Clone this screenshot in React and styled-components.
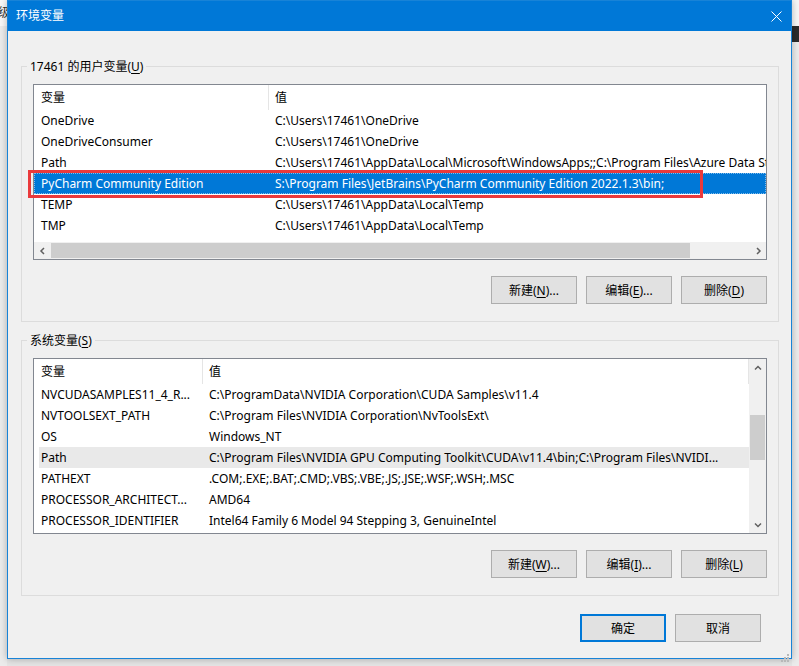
import React from "react";
import styled, { createGlobalStyle } from "styled-components";

const userVars = [
  { name: "OneDrive", value: "C:\\Users\\17461\\OneDrive" },
  { name: "OneDriveConsumer", value: "C:\\Users\\17461\\OneDrive" },
  {
    name: "Path",
    value:
      "C:\\Users\\17461\\AppData\\Local\\Microsoft\\WindowsApps;;C:\\Program Files\\Azure Data Studio\\bin",
  },
  {
    name: "PyCharm Community Edition",
    value: "S:\\Program Files\\JetBrains\\PyCharm Community Edition 2022.1.3\\bin;",
    tone: "focus",
  },
  { name: "TEMP", value: "C:\\Users\\17461\\AppData\\Local\\Temp" },
  { name: "TMP", value: "C:\\Users\\17461\\AppData\\Local\\Temp" },
];

const systemVars = [
  { name: "NVCUDASAMPLES11_4_R...", value: "C:\\ProgramData\\NVIDIA Corporation\\CUDA Samples\\v11.4" },
  { name: "NVTOOLSEXT_PATH", value: "C:\\Program Files\\NVIDIA Corporation\\NvToolsExt\\" },
  { name: "OS", value: "Windows_NT" },
  {
    name: "Path",
    value: "C:\\Program Files\\NVIDIA GPU Computing Toolkit\\CUDA\\v11.4\\bin;C:\\Program Files\\NVIDI...",
    tone: "dim",
  },
  { name: "PATHEXT", value: ".COM;.EXE;.BAT;.CMD;.VBS;.VBE;.JS;.JSE;.WSF;.WSH;.MSC" },
  { name: "PROCESSOR_ARCHITECT...", value: "AMD64" },
  { name: "PROCESSOR_IDENTIFIER", value: "Intel64 Family 6 Model 94 Stepping 3, GenuineIntel" },
];

const Chevron = ({ dir }) => {
  const paths = {
    left: "M5 1 L2 4 L5 7",
    right: "M3 1 L6 4 L3 7",
    up: "M1 5.5 L4 2.5 L7 5.5",
    down: "M1 2.5 L4 5.5 L7 2.5",
  };
  return (
    <svg width="8" height="8" viewBox="0 0 8 8">
      <path d={paths[dir]} fill="none" stroke="#606060" strokeWidth="1.5" />
    </svg>
  );
};

const VarList = ({ rows, nameWidth, valueDivider, scroll, children }) => (
  <ListBox>
    <ListMain>
      <HeaderRow>
        <HeaderCell $w={nameWidth} $pad={7} $divider>
          变量
        </HeaderCell>
        <HeaderCell $pad={6} $divider={valueDivider}>
          值
        </HeaderCell>
      </HeaderRow>
      {rows.map((r) => (
        <Row key={r.name + r.value} $tone={r.tone}>
          <Cell $w={nameWidth} $pad={7}>
            {r.name}
          </Cell>
          <Cell $pad={6}>{r.value}</Cell>
        </Row>
      ))}
      {scroll === "h" && (
        <>
          <Spacer />
          <HScroll>
            <ArrowBtn>
              <Chevron dir="left" />
            </ArrowBtn>
            <Track>
              <Thumb $h $offset={0} $size={639} />
            </Track>
            <ArrowBtn>
              <Chevron dir="right" />
            </ArrowBtn>
          </HScroll>
        </>
      )}
    </ListMain>
    {scroll === "v" && (
      <VScroll>
        <ArrowBtn>
          <Chevron dir="up" />
        </ArrowBtn>
        <Track $v>
          <Thumb $offset={39} $size={45} />
        </Track>
        <ArrowBtn>
          <Chevron dir="down" />
        </ArrowBtn>
      </VScroll>
    )}
    {children}
  </ListBox>
);

const ActionButtons = ({ keys }) => (
  <ButtonRow>
    <Button>
      新建(<u>{keys[0]}</u>)...
    </Button>
    <Button>
      编辑(<u>{keys[1]}</u>)...
    </Button>
    <Button>
      删除(<u>{keys[2]}</u>)
    </Button>
  </ButtonRow>
);

const App = () => {
  return (
    <>
      <GlobalStyle />
      <Backdrop>
        <LeftStrip>
          <GhostText>
            <span>级</span>
          </GhostText>
        </LeftStrip>
        <Window>
          <TitleBar>
            <Title>环境变量</Title>
            <CloseButton>
              <svg width="11" height="11" viewBox="0 0 11 11">
                <path d="M0.5 0.5 L10.5 10.5 M10.5 0.5 L0.5 10.5" stroke="#fff" strokeWidth="1" />
              </svg>
            </CloseButton>
          </TitleBar>
          <Body>
            <Group>
              <Legend>
                17461 的用户变量(<u>U</u>)
              </Legend>
              <VarList rows={userVars} nameWidth={235} scroll="h">
                <Marker />
              </VarList>
              <ActionButtons keys={["N", "E", "D"]} />
            </Group>
            <Group $gap>
              <Legend>
                系统变量(<u>S</u>)
              </Legend>
              <VarList rows={systemVars} nameWidth={169} valueDivider scroll="v" />
              <ActionButtons keys={["W", "I", "L"]} />
            </Group>
          </Body>
          <Footer>
            <Button $primary>确定</Button>
            <Button>取消</Button>
          </Footer>
          <Grip>
            <svg width="8" height="8" viewBox="0 0 8 8">
              <rect x="6" y="0" width="2" height="2" fill="#b8b8b8" />
              <rect x="3" y="3" width="2" height="2" fill="#b8b8b8" />
              <rect x="6" y="3" width="2" height="2" fill="#b8b8b8" />
              <rect x="0" y="6" width="2" height="2" fill="#b8b8b8" />
              <rect x="3" y="6" width="2" height="2" fill="#b8b8b8" />
              <rect x="6" y="6" width="2" height="2" fill="#b8b8b8" />
            </svg>
          </Grip>
        </Window>
        <RightStrip>
          <Patch $h={26} $bg="#f7f7f7" />
          <Patch $h={16} $bg="#2b2b2b" />
        </RightStrip>
      </Backdrop>
    </>
  );
};

export default App;

const GlobalStyle = createGlobalStyle`
  html, body {
    margin: 0;
    padding: 0;
  }
  body {
    font-family: "Noto Sans", "Noto Sans CJK SC", sans-serif;
    font-size: 12px;
    color: #000;
    background: #ececec;
  }
  u {
    text-underline-offset: 2px;
  }
`;

const Backdrop = styled.div`
  display: flex;
  align-items: flex-start;
  width: 799px;
  height: 666px;
  overflow: hidden;
  background: #e4e4e4;
`;

const LeftStrip = styled.div`
  width: 7px;
  height: 100%;
  flex-shrink: 0;
  overflow: hidden;
  background: #ebebeb;
`;

const GhostText = styled.div`
  display: flex;
  justify-content: flex-end;
  height: 26px;
  line-height: 26px;
  background: #f7f7f7;
  color: #333;
  span {
    flex-shrink: 0;
    margin-right: -3px;
  }
`;

const RightStrip = styled.div`
  width: 7px;
  height: 100%;
  flex-shrink: 0;
  background: #ebebeb;
`;

const Patch = styled.div`
  height: ${(p) => p.$h}px;
  background: ${(p) => p.$bg};
`;

const Window = styled.div`
  position: relative;
  z-index: 1;
  display: flex;
  flex-direction: column;
  width: 785px;
  height: 659px;
  flex-shrink: 0;
  box-sizing: border-box;
  border: 1px solid #1883d7;
  background: #f0f0f0;
  box-shadow: 0 0 7px rgba(0, 0, 0, 0.28);
`;

const TitleBar = styled.div`
  display: flex;
  align-items: center;
  height: 30px;
  background: #0078d7;
  color: #fff;
`;

const Title = styled.div`
  flex: 1;
  padding-left: 8px;
  line-height: 30px;
`;

const CloseButton = styled.div`
  display: flex;
  align-items: center;
  justify-content: center;
  width: 30px;
  height: 30px;
`;

const Body = styled.div`
  display: flex;
  flex-direction: column;
  padding: 27px 12px 0 13px;
`;

const Group = styled.fieldset`
  margin: ${(p) => (p.$gap ? "10px 0 0" : "0")};
  min-width: 0;
  padding: 9px 11px 17px 11px;
  border: 1px solid #dcdcdc;
`;

const Legend = styled.legend`
  margin-left: -6px;
  padding: 0 3px;
  line-height: 17px;
  font-size: 12px;
`;

const ListBox = styled.div`
  position: relative;
  display: flex;
  height: 176px;
  box-sizing: border-box;
  border: 1px solid #828790;
  background: #fff;
`;

const ListMain = styled.div`
  flex: 1;
  min-width: 0;
  display: flex;
  flex-direction: column;
  overflow: hidden;
`;

const HeaderRow = styled.div`
  display: flex;
  height: 25px;
  flex-shrink: 0;
`;

const HeaderCell = styled.div`
  box-sizing: border-box;
  ${(p) => (p.$w ? `width: ${p.$w}px; flex-shrink: 0;` : "flex: 1;")}
  padding-left: ${(p) => p.$pad}px;
  line-height: 25px;
  white-space: nowrap;
  border-right: ${(p) => (p.$divider ? "1px solid #e5e5e5" : "none")};
`;

const Row = styled.div`
  display: flex;
  height: 21px;
  flex-shrink: 0;
  line-height: 21px;
  white-space: nowrap;
  color: ${(p) => (p.$tone === "focus" ? "#fff" : "#000")};
  background: ${(p) =>
    p.$tone === "focus"
      ? "#0078d7"
      : p.$tone === "dim"
      ? "linear-gradient(to right, transparent 5px, #e9e9e9 5px)"
      : "transparent"};
  outline: ${(p) => (p.$tone === "focus" ? "1px dotted rgba(255,255,255,0.5)" : "none")};
  outline-offset: -1px;
`;

const Cell = styled.div`
  box-sizing: border-box;
  ${(p) => (p.$w ? `width: ${p.$w}px; flex-shrink: 0;` : "flex: 1;")}
  min-width: 0;
  padding-left: ${(p) => p.$pad}px;
  overflow: hidden;
`;

const Spacer = styled.div`
  flex: 1;
`;

const HScroll = styled.div`
  display: flex;
  height: 17px;
  flex-shrink: 0;
  background: #f0f0f0;
`;

const VScroll = styled.div`
  display: flex;
  flex-direction: column;
  width: 17px;
  flex-shrink: 0;
  background: #f0f0f0;
`;

const ArrowBtn = styled.div`
  display: flex;
  align-items: center;
  justify-content: center;
  width: 17px;
  height: 17px;
  flex-shrink: 0;
`;

const Track = styled.div`
  flex: 1;
  display: flex;
  flex-direction: ${(p) => (p.$v ? "column" : "row")};
  align-items: center;
`;

const Thumb = styled.div`
  background: #cdcdcd;
  flex-shrink: 0;
  ${(p) =>
    p.$h
      ? `width: ${p.$size}px; height: 15px; margin-left: ${p.$offset}px;`
      : `height: ${p.$size}px; width: 15px; margin-top: ${p.$offset}px;`}
`;

const Marker = styled.div`
  position: absolute;
  left: -6px;
  top: 85px;
  width: 675px;
  height: 28px;
  box-sizing: border-box;
  border: 3px solid #ea3a3c;
  pointer-events: none;
`;

const ButtonRow = styled.div`
  display: flex;
  justify-content: flex-end;
  gap: 9px;
  margin-top: 16px;
`;

const Button = styled.button`
  width: 86px;
  height: 28px;
  padding: 0;
  box-sizing: border-box;
  font-family: inherit;
  font-size: 12px;
  color: #000;
  background: #e1e1e1;
  border: ${(p) => (p.$primary ? "2px solid #0078d7" : "1px solid #adadad")};
  border-radius: 0;
`;

const Footer = styled.div`
  display: flex;
  justify-content: flex-end;
  gap: 9px;
  margin-top: 18px;
  padding-right: 30px;
`;

const Grip = styled.div`
  position: absolute;
  right: 2px;
  bottom: 1px;
  width: 8px;
  height: 8px;
`;
